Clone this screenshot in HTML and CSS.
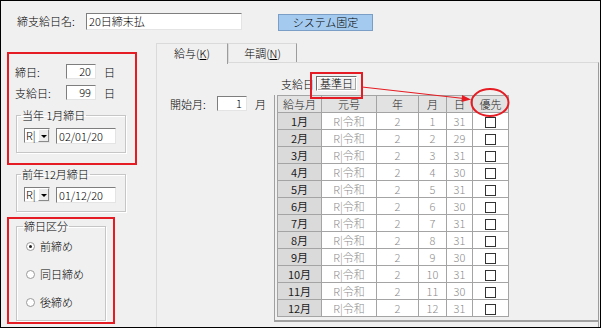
FILE: index.html
```html
<!DOCTYPE html>
<html lang="ja">
<head>
  <meta charset="UTF-8" />
  <title>締支給日設定</title>
  <link rel="stylesheet" href="styles.css">
</head>
<body>
  <div class="window">
    <div class="top-row">
      <span class="top-label">締支給日名:</span>
      <span class="field name-field">20日締末払</span>
      <span class="sys-btn">システム固定</span>
    </div>

    <div class="main">
      <div class="left-col">
        <div class="mark close-box">
          <div class="day-row">
            <span class="day-label">締日:</span>
            <span class="field num">20</span>
            <span class="unit">日</span>
          </div>
          <div class="day-row">
            <span class="day-label">支給日:</span>
            <span class="field num">99</span>
            <span class="unit">日</span>
          </div>
          <fieldset class="group date-group">
            <legend>当年 1月締日</legend>
            <div class="date-row">
              <span class="combo"><span class="combo-text">R|</span><span class="drop"></span></span>
              <span class="field date">02/01/20</span>
            </div>
          </fieldset>
        </div>

        <fieldset class="group date-group prev-group">
          <legend>前年12月締日</legend>
          <div class="date-row">
            <span class="combo"><span class="combo-text">R|</span><span class="drop"></span></span>
            <span class="field date">01/12/20</span>
          </div>
        </fieldset>

        <div class="mark kind-box">
          <fieldset class="group kind-group">
            <legend>締日区分</legend>
            <div class="radio-row"><span class="radio checked"></span>前締め</div>
            <div class="radio-row"><span class="radio"></span>同日締め</div>
            <div class="radio-row"><span class="radio"></span>後締め</div>
          </fieldset>
        </div>
      </div>

      <div class="tab-area">
        <div class="tabs">
          <span class="tab active">給与(<u>K</u>)</span>
          <span class="tab">年調(<u>N</u>)</span>
        </div>
        <div class="page">
          <div class="start-row">
            <span class="start-label">開始月:</span>
            <span class="field num">1</span>
            <span class="unit">月</span>
          </div>
          <div class="grid-area">
            <div class="grid-head">
              <span>支給日</span>
              <span class="base-btn">基準日</span>
            </div>
            <div class="grid-frame">
              <table class="grid">
                <colgroup>
                  <col style="width:44px"><col style="width:55px"><col style="width:42px">
                  <col style="width:28px"><col style="width:26px"><col style="width:36px">
                </colgroup>
                <tr class="head"><td>給与月</td><td>元号</td><td>年</td><td>月</td><td>日</td><td>優先</td></tr>
                <tr><td class="mon">1月</td><td>R|令和</td><td>2</td><td>1</td><td>31</td><td><span class="chk"></span></td></tr>
                <tr><td class="mon">2月</td><td>R|令和</td><td>2</td><td>2</td><td>29</td><td><span class="chk"></span></td></tr>
                <tr><td class="mon">3月</td><td>R|令和</td><td>2</td><td>3</td><td>31</td><td><span class="chk"></span></td></tr>
                <tr><td class="mon">4月</td><td>R|令和</td><td>2</td><td>4</td><td>30</td><td><span class="chk"></span></td></tr>
                <tr><td class="mon">5月</td><td>R|令和</td><td>2</td><td>5</td><td>31</td><td><span class="chk"></span></td></tr>
                <tr><td class="mon">6月</td><td>R|令和</td><td>2</td><td>6</td><td>30</td><td><span class="chk"></span></td></tr>
                <tr><td class="mon">7月</td><td>R|令和</td><td>2</td><td>7</td><td>31</td><td><span class="chk"></span></td></tr>
                <tr><td class="mon">8月</td><td>R|令和</td><td>2</td><td>8</td><td>31</td><td><span class="chk"></span></td></tr>
                <tr><td class="mon">9月</td><td>R|令和</td><td>2</td><td>9</td><td>30</td><td><span class="chk"></span></td></tr>
                <tr><td class="mon">10月</td><td>R|令和</td><td>2</td><td>10</td><td>31</td><td><span class="chk"></span></td></tr>
                <tr><td class="mon">11月</td><td>R|令和</td><td>2</td><td>11</td><td>30</td><td><span class="chk"></span></td></tr>
                <tr><td class="mon">12月</td><td>R|令和</td><td>2</td><td>12</td><td>31</td><td><span class="chk"></span></td></tr>
              </table>
            </div>
          </div>
        </div>
      </div>
    </div>

    <svg class="notes" width="601" height="328" viewBox="0 0 601 328">
      <rect x="311" y="73" width="51" height="25" fill="none" stroke="#e51c23" stroke-width="2" />
      <line x1="362" y1="87" x2="464" y2="98.5" stroke="#e51c23" stroke-width="1.2" />
      <polygon points="471,99.5 462,95 461.5,102" fill="#e51c23" />
      <ellipse cx="490" cy="102.5" rx="18.5" ry="13.5" fill="none" stroke="#e51c23" stroke-width="2" />
    </svg>
  </div>
</body>
</html>
```

FILE: styles.css
```css
body {
  margin: 0;
  font-family: "Noto Sans CJK JP", sans-serif;
  font-size: 11px;
  font-weight: 300;
  color: #000;
}

.window {
  position: relative;
  width: 601px;
  height: 328px;
  box-sizing: border-box;
  border: 1px solid #000;
  background: #f0f0f0;
  display: flex;
  flex-direction: column;
}

.top-row {
  display: flex;
  height: 40px;
  padding: 12px 0 0 16px;
  box-sizing: border-box;
  flex: none;
}

.top-label {
  width: 69px;
  line-height: 17px;
}

.field {
  background: #fff;
  border: 1px solid;
  border-color: #7e7e7e #e4e4e4 #e4e4e4 #7e7e7e;
  box-sizing: border-box;
  height: 17px;
  line-height: 15px;
  white-space: nowrap;
}

.name-field {
  width: 156px;
  padding-left: 2px;
}

.sys-btn {
  margin: 1px 0 0 36px;
  width: 95px;
  height: 17px;
  box-sizing: border-box;
  border: 1px solid #7b9ec6;
  background: #a4cbef;
  text-align: center;
  line-height: 15px;
}

.main {
  display: flex;
  flex: 1;
  min-height: 0;
}

.left-col {
  width: 155px;
  flex: none;
}

.mark {
  border: 2px solid #e51c23;
  box-sizing: border-box;
  margin-left: 6px;
}

.close-box {
  margin-top: 11px;
  width: 130px;
  height: 113px;
  padding-top: 10px;
}

.day-row {
  display: flex;
  align-items: center;
  height: 15px;
  padding-left: 6px;
  margin-bottom: 6px;
}

.day-label {
  width: 51px;
}

.num {
  width: 30px;
  height: 15px;
  line-height: 13px;
  text-align: right;
  padding-right: 4px;
}

.unit {
  margin-left: 8px;
}

.group {
  margin: 0;
  padding: 7px 0 8px 7px;
  border: 1px solid #c6c6c6;
  box-shadow: inset 1px 1px #fff, 1px 1px #fff;
  box-sizing: border-box;
}

.group legend {
  padding: 0 1px;
  margin-left: -3px;
  line-height: 12px;
}

.date-group {
  width: 110px;
  margin: 9px 0 0 7px;
}

.prev-group {
  margin: 3px 0 0 15px;
}

.date-row {
  display: flex;
  gap: 6px;
}

.combo {
  display: flex;
  width: 26px;
  height: 15px;
  box-sizing: border-box;
  background: #fff;
  border: 1px solid;
  border-color: #7e7e7e #e4e4e4 #e4e4e4 #7e7e7e;
}

.combo-text {
  flex: 1;
  line-height: 13px;
  padding-left: 1px;
}

.drop {
  position: relative;
  width: 11px;
  background: #ececec;
  border: 1px solid;
  border-color: #fff #8a8a8a #8a8a8a #fff;
  box-sizing: border-box;
}

.drop::after {
  content: "";
  position: absolute;
  left: 2px;
  top: 5px;
  border-left: 3px solid transparent;
  border-right: 3px solid transparent;
  border-top: 3px solid #000;
}

.date {
  width: 60px;
  height: 16px;
  padding-left: 2px;
  line-height: 14px;
}

.kind-box {
  margin-top: 5px;
  width: 108px;
  height: 107px;
}

.kind-group {
  width: 90px;
  height: 101px;
  margin: 1px 0 0 7px;
  padding-left: 9px;
}

.radio-row {
  display: flex;
  align-items: center;
  height: 14px;
  margin-bottom: 14px;
}

.radio {
  position: relative;
  width: 7px;
  height: 7px;
  margin-right: 5px;
  border: 1px solid #9a9a9a;
  border-radius: 50%;
  background: #fff;
}

.radio.checked::after {
  content: "";
  position: absolute;
  left: 2px;
  top: 2px;
  width: 3px;
  height: 3px;
  border-radius: 50%;
  background: #222;
}

.tab-area {
  flex: 1;
  display: flex;
  flex-direction: column;
  margin-right: 1px;
  padding-top: 2px;
}

.tabs {
  display: flex;
  height: 20px;
  flex: none;
}

.tab {
  width: 69px;
  height: 20px;
  box-sizing: border-box;
  text-align: center;
  line-height: 19px;
  border: 1px solid;
  border-color: #dadada #9c9c9c transparent #dadada;
  border-bottom: none;
}

.tab.active {
  position: relative;
  width: 72px;
  height: 21px;
  background: #f0f0f0;
  z-index: 1;
}

.page {
  flex: 1;
  display: flex;
  border: 1px solid;
  border-color: #dadada #9c9c9c transparent #dadada;
  border-bottom: none;
  margin-top: -1px;
}

.start-row {
  display: flex;
  align-items: center;
  width: 104px;
  height: 15px;
  margin: 33px 0 0 13px;
  flex: none;
}

.start-label {
  width: 47px;
}

.grid-area {
  flex: 1;
  display: flex;
  flex-direction: column;
  padding-top: 13px;
}

.grid-head {
  display: flex;
  align-items: center;
  height: 15px;
  padding-left: 7px;
}

.base-btn {
  margin-left: 2px;
  width: 41px;
  height: 15px;
  box-sizing: border-box;
  border: 1px solid;
  border-color: #6e6e6e #fff #fff #6e6e6e;
  box-shadow: inset 1px 1px #fff, inset -1px -1px #a8a8a8;
  text-align: center;
  line-height: 13px;
}

.grid-frame {
  margin-top: 4px;
  border-left: 1px solid #a0a0a0;
  border-bottom: 2px solid #a0a0a0;
  padding: 0 0 3px 2px;
}

.grid {
  border-collapse: collapse;
  table-layout: fixed;
  width: 231px;
}

.grid tr {
  height: 17px;
}

.grid td {
  border: 1px solid #a4a4a4;
  padding: 0;
  text-align: center;
  line-height: 14px;
  background: #fff;
  color: #8c8c8c;
  white-space: nowrap;
}

.grid .head td {
  background: #e2e2e2;
  color: #222;
}

.grid td.mon {
  background: #dadada;
  color: #1c1c1c;
  font-weight: 400;
}

.chk {
  display: inline-block;
  width: 9px;
  height: 9px;
  vertical-align: middle;
  border: 1px solid #333;
  background: #fff;
}

.notes {
  position: absolute;
  left: -1px;
  top: -1px;
  pointer-events: none;
}
```
